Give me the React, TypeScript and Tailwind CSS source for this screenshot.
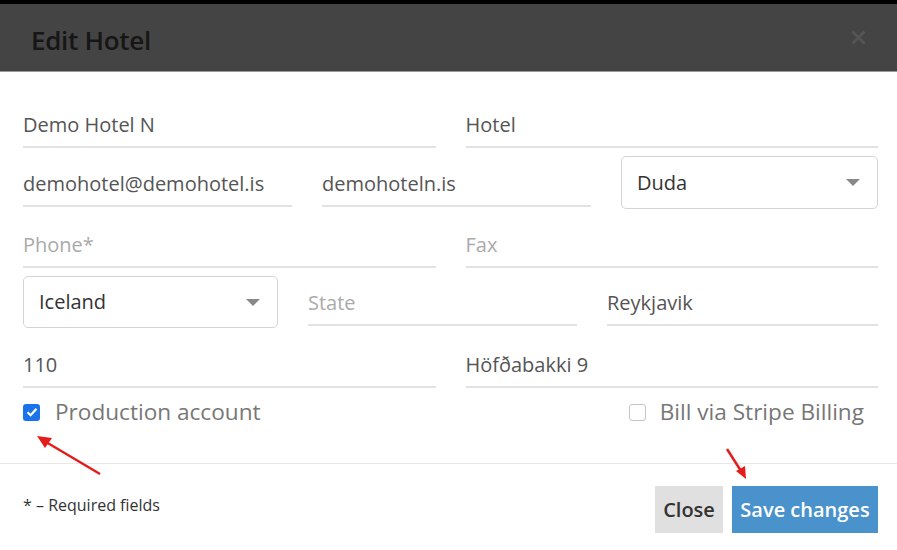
import React from 'react';

const font = { fontFamily: '"Open Sans", "Noto Sans", sans-serif' };

const LineInput: React.FC<{ value?: string; placeholder?: string; className?: string }> = ({ value, placeholder, className = '' }) => (
  <div className={`h-[44px] border-b-2 border-[#e2e2e2] flex items-center text-[20px] ${className}`}>
    {value ? <span className="text-[#555]">{value}</span> : <span className="text-[#aaa]">{placeholder}</span>}
  </div>
);

const Select: React.FC<{ value: string; className?: string }> = ({ value, className = '' }) => (
  <div className={`border border-[#d4d4d4] rounded-[5px] flex items-center justify-between pl-[15px] pr-[17px] text-[20px] text-[#333] ${className}`}>
    <span>{value}</span>
    <svg width="14" height="7" viewBox="0 0 14 7">
      <path d="M0 0 L14 0 L7 7 Z" fill="#888" />
    </svg>
  </div>
);

export default function App() {
  return (
    <div className="relative w-[897px] h-[550px] bg-white overflow-hidden" style={font}>
      {/* header */}
      <div className="h-[4px] bg-black" />
      <div className="h-[68px] bg-[#444] border-b border-[#9a9a9a] flex items-center justify-between pl-[31px] pr-[31px] pt-[5px]">
        <h1 className="text-[26px] font-semibold text-[#161616] tracking-[-0.3px]">Edit Hotel</h1>
        <svg width="15" height="15" viewBox="0 0 15 15" className="mb-[6px]">
          <path d="M1.5 1.5 L13.5 13.5 M13.5 1.5 L1.5 13.5" stroke="#555" strokeWidth="2.6" />
        </svg>
      </div>

      {/* body */}
      <div className="pl-[23px] pr-[19px] pt-[32px] pb-[39px]">
        <div className="grid grid-cols-2 gap-x-[30px]">
          <LineInput value="Demo Hotel N" />
          <LineInput value="Hotel" />
        </div>
        <div className="grid grid-cols-[269px_269px_1fr] gap-x-[30px] items-end mt-[8px]">
          <LineInput value="demohotel@demohotel.is" className="mb-[2px]" />
          <LineInput value="demohoteln.is" className="mb-[2px]" />
          <Select value="Duda" className="h-[53px]" />
        </div>
        <div className="grid grid-cols-2 gap-x-[30px] mt-[15px]">
          <LineInput placeholder="Phone*" />
          <LineInput placeholder="Fax" />
        </div>
        <div className="grid grid-cols-[255px_269px_1fr] gap-x-[30px] items-end mt-[8px]">
          <Select value="Iceland" className="h-[52px]" />
          <LineInput placeholder="State" className="mb-[2px]" />
          <LineInput value="Reykjavik" className="mb-[2px]" />
        </div>
        <div className="grid grid-cols-2 gap-x-[30px] mt-[16px]">
          <LineInput value="110" />
          <LineInput value="Höfðabakki 9" />
        </div>
        <div className="flex justify-between items-center h-[24px] mt-[12px] text-[22.6px] text-[#777]">
          <label className="flex items-center gap-[15px]">
            <span className="w-[17px] h-[17px] rounded-[3px] bg-[#1a73e8] flex items-center justify-center">
              <svg width="12" height="10" viewBox="0 0 12 10">
                <path d="M1.5 5.2 L4.6 8.2 L10.5 1.8" stroke="white" strokeWidth="2.2" fill="none" />
              </svg>
            </span>
            Production account
          </label>
          <label className="flex items-center gap-[14px] mr-[14px]">
            <span className="w-[17px] h-[17px] rounded-[3px] border border-[#c4c4c4] bg-white" />
            Bill via Stripe Billing
          </label>
        </div>
      </div>

      {/* footer */}
      <div className="border-t border-[#e8e8e8] pl-[23px] pr-[19px] pt-[22px] flex items-start justify-between">
        <span className="text-[16px] text-[#333] mt-[7px]">* – Required fields</span>
        <div className="flex gap-[9px]">
          <button className="h-[47px] w-[68px] bg-[#e0e0e0] text-[#333] text-[20px] font-semibold">Close</button>
          <button className="h-[47px] w-[146px] bg-[#4a92cb] text-white text-[20px] font-semibold">Save changes</button>
        </div>
      </div>

      {/* annotation arrows */}
      <svg className="absolute left-0 top-0 pointer-events-none" width="897" height="550">
        <line x1="100" y1="474" x2="46" y2="442" stroke="#e51c1c" strokeWidth="2.5" />
        <path d="M37 436 L52 438 L45 448 Z" fill="#e51c1c" />
        <line x1="727" y1="449" x2="741" y2="471" stroke="#e51c1c" strokeWidth="2.5" />
        <path d="M746 479 L736 471 L745 466 Z" fill="#e51c1c" />
      </svg>
    </div>
  );
}
